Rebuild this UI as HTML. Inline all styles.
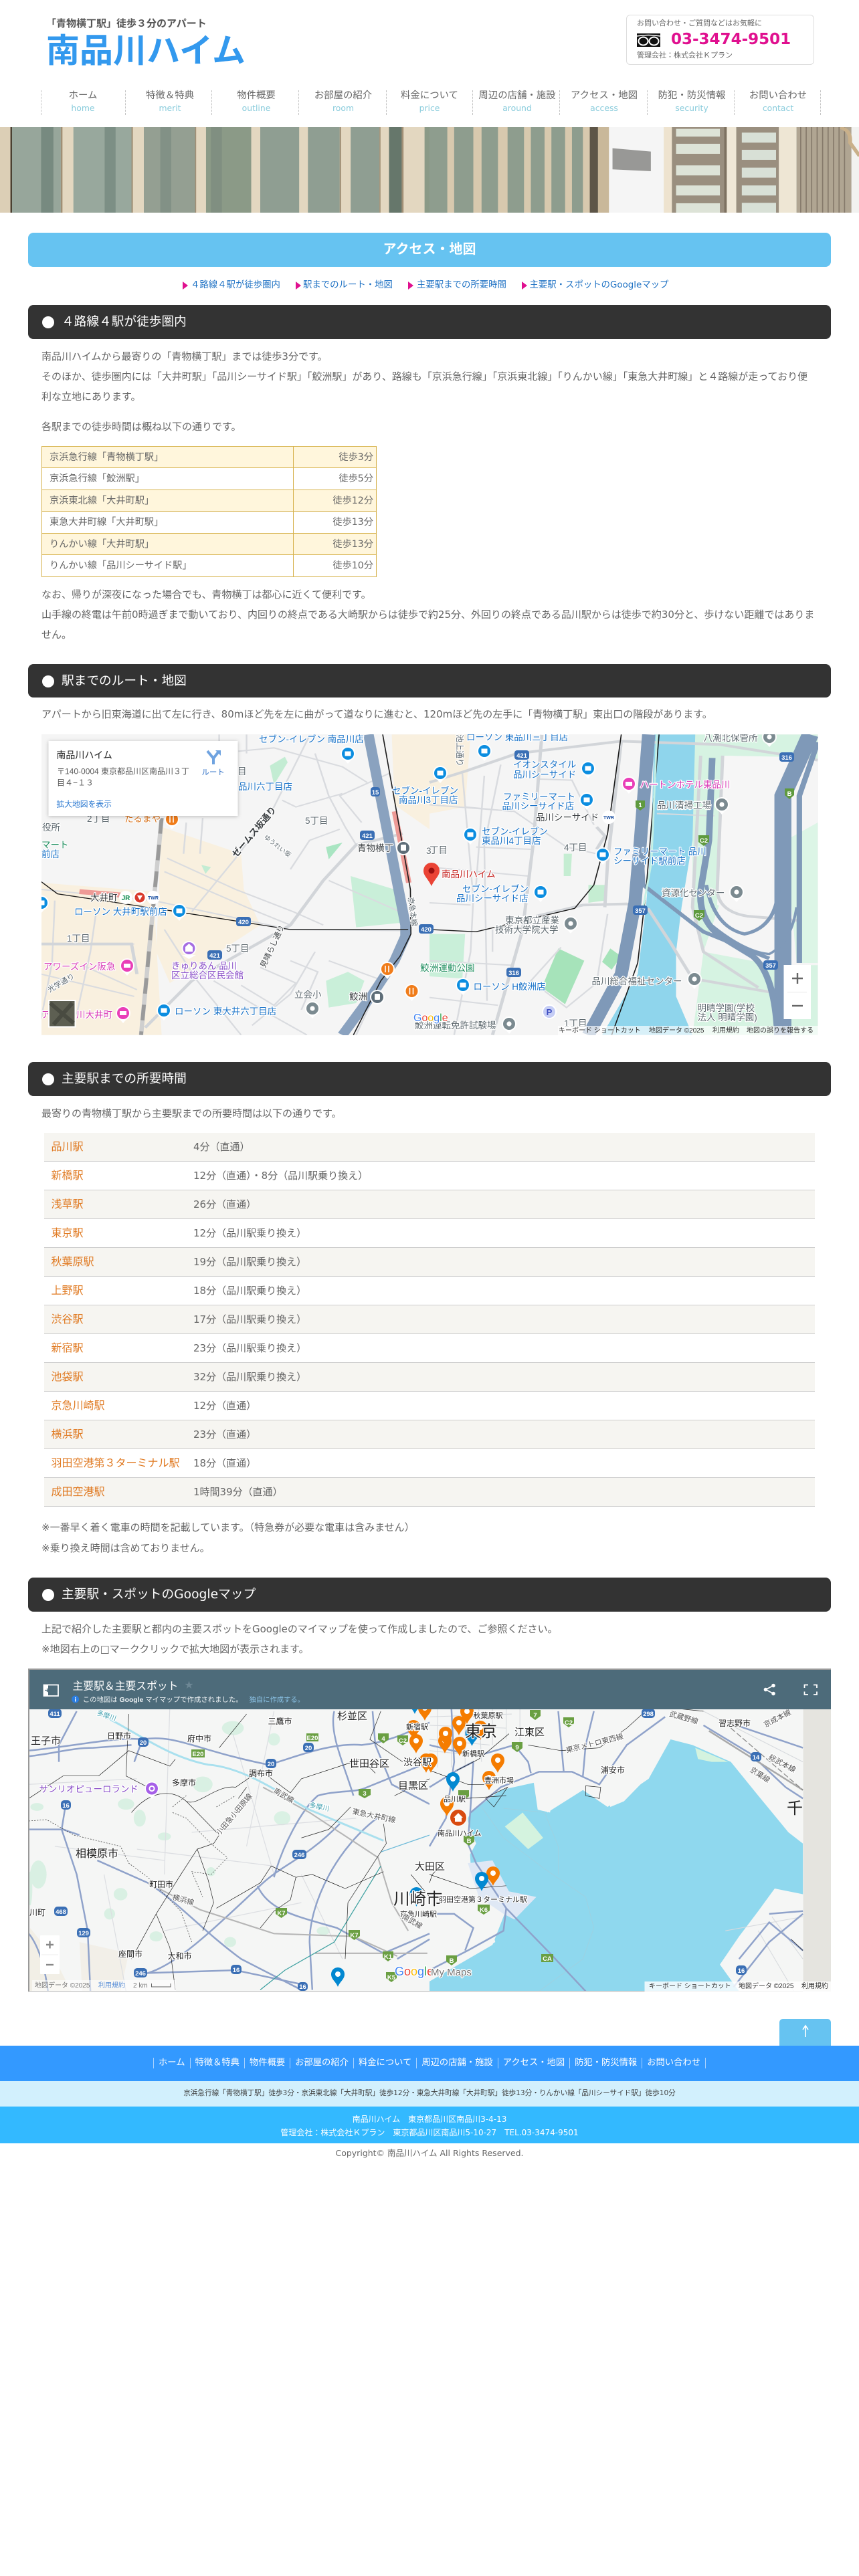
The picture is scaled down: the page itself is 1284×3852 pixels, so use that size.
<!DOCTYPE html>
<html lang="ja"><head><meta charset="utf-8"><title>アクセス・地図 | 南品川ハイム</title>
<style>
html,body{margin:0;padding:0;background:#fff}
body{position:relative;width:1284px;height:3852px;overflow:hidden;font-family:"DejaVu Sans","Noto Sans CJK JP",sans-serif;color:#666;font-size:14.4px}
.t{position:absolute;white-space:nowrap;line-height:20px;height:20px}
.p{font-size:15px;margin-top:1px}
.b{position:absolute}
.bar{position:absolute;left:42px;width:1200px;background:#333;border-radius:8px;color:#fff;font-size:18.7px}
.bar i{position:absolute;left:21px;width:18px;height:18px;border-radius:50%;background:#fff}
.bar span{position:absolute;left:50px;white-space:nowrap}
.nv{position:absolute;top:135px;height:37px;border-left:1px dashed #c4c4c4}
.nl{position:absolute;width:130px;text-align:center;top:133px;line-height:20px;font-size:14.4px;color:#666;white-space:nowrap}
.ns{position:absolute;width:130px;text-align:center;top:152px;line-height:20px;font-size:12.4px;color:#8accdc;white-space:nowrap}
.a{position:absolute;top:417px;line-height:20px;font-size:13.4px;color:#1f72c4;white-space:nowrap}
.ar{position:absolute;top:421px;width:0;height:0;border-left:8px solid #e0108f;border-top:6px solid transparent;border-bottom:6px solid transparent}
table{border-collapse:collapse;position:absolute}
#t1{left:62px;top:667px;width:500px;table-layout:fixed}
#t1 td{border:1px solid #d6b24c;height:31.5px;padding:0 4px 0 11px;font-size:14.2px;color:#666;box-sizing:border-box;white-space:nowrap;line-height:20px}
#t1 td+td{text-align:right}
#t1 tr:nth-child(odd) td{background:#fff6dc}
.r{position:absolute;left:66px;width:1152px;height:43px;border-bottom:1px solid #ccc;box-sizing:border-box}
.r.o{background:#f6f5f1}
.r b{position:absolute;left:10.5px;top:11px;font-weight:normal;font-size:16px;color:#e07a22;line-height:20px;white-space:nowrap}
.r u{position:absolute;left:223px;top:11px;text-decoration:none;font-size:15px;color:#666;line-height:20px;white-space:nowrap}
svg{position:absolute;display:block}
svg text{font-family:"Liberation Sans","Noto Sans CJK JP",sans-serif}
.h{paint-order:stroke;stroke:#fff;stroke-width:2.5px;stroke-linejoin:round}
.bl{fill:#1a73c8;font-size:13.5px}.gy{fill:#5f6a70;font-size:13.5px}.dk{fill:#3c4043;font-size:13.5px}.pk{fill:#d83bb5;font-size:13.5px}.pu{fill:#8a4fc8;font-size:13.5px}.gr{fill:#1e8e5e;font-size:13.5px}.og{fill:#d9731c;font-size:13.5px}
.s{fill:#fff;font-size:9.5px;font-weight:bold;text-anchor:middle}
.k{fill:#222;font-size:12px}.k2{fill:#222;font-size:15px}.k3{fill:#222;font-size:11px}.rl{fill:#555;font-size:11px}
.at{font-size:10px;fill:#333}
.fn{position:absolute;left:0;width:1284px;top:3075px;display:flex;justify-content:center;color:#fff;font-size:13.3px;line-height:20px;white-space:nowrap}
.fn span{padding:0 7px;border-left:1px solid #a8d2ff;height:16px;line-height:16px;margin-top:2px}
.fn span:last-child{padding:0;width:0}
.c{position:absolute;left:0;width:1284px;text-align:center;white-space:nowrap;line-height:20px}
</style></head><body>

<div class="t" style="left:69px;top:25px;font-size:15px;font-weight:bold;color:#555">「青物横丁駅」徒歩３分のアパート</div>
<div class="t" style="left:69px;top:66px;font-size:50px;font-weight:bold;color:#3399ee;line-height:20px">南品川ハイム</div>

<div class="b" style="left:936px;top:22px;width:281px;height:75px;border:1px solid #ddd;border-radius:6px;box-sizing:border-box"></div>
<div class="t" style="left:952px;top:25px;font-size:11px;color:#666">お問い合わせ・ご質問などはお気軽に</div>
<svg style="left:952px;top:50px" width="35" height="20" viewBox="0 0 35 20"><rect width="35" height="20" fill="#111"/><path d="M0 4 Q17 1 35 4" stroke="#fff" stroke-width="1.6" fill="none"/><ellipse cx="9.500" cy="11.500" rx="7" ry="6" fill="none" stroke="#fff" stroke-width="2"/><ellipse cx="25.500" cy="11.500" rx="7" ry="6" fill="none" stroke="#fff" stroke-width="2"/></svg>
<div class="t" style="left:1003px;top:49px;font-size:23px;font-weight:bold;color:#e0108f">03-3474-9501</div>
<div class="t" style="left:952px;top:73px;font-size:11px;color:#666">管理会社：株式会社Ｋプラン</div>

<div class="nv" style="left:61px"></div><div class="nv" style="left:187px"></div><div class="nv" style="left:316px"></div><div class="nv" style="left:446px"></div><div class="nv" style="left:577px"></div><div class="nv" style="left:706px"></div><div class="nv" style="left:836px"></div><div class="nv" style="left:967px"></div><div class="nv" style="left:1097px"></div><div class="nv" style="left:1226px"></div>
<div class="nl" style="left:59px">ホーム</div><div class="ns" style="left:59px">home</div>
<div class="nl" style="left:189px">特徴＆特典</div><div class="ns" style="left:189px">merit</div>
<div class="nl" style="left:318px">物件概要</div><div class="ns" style="left:318px">outline</div>
<div class="nl" style="left:448px">お部屋の紹介</div><div class="ns" style="left:448px">room</div>
<div class="nl" style="left:577px">料金について</div><div class="ns" style="left:577px">price</div>
<div class="nl" style="left:708px">周辺の店舗・施設</div><div class="ns" style="left:708px">around</div>
<div class="nl" style="left:838px">アクセス・地図</div><div class="ns" style="left:838px">access</div>
<div class="nl" style="left:969px">防犯・防災情報</div><div class="ns" style="left:969px">security</div>
<div class="nl" style="left:1098px">お問い合わせ</div><div class="ns" style="left:1098px">contact</div>

<!-- hero -->
<svg style="left:0;top:190px" width="1284" height="128" viewBox="0 190 1284 128">
<rect x="0" y="190" width="1284" height="128" fill="#8f9e92"/>
<g transform="scale(.4095,.3333)">
<rect y="570" width="40" height="385" fill="#dccfb6"/><rect x="38" y="570" width="6" height="385" fill="#4a4032"/>
<rect x="44" y="570" width="180" height="385" fill="#97a69b"/><rect x="150" y="570" width="45" height="385" fill="#778a80"/>
<rect x="268" y="570" width="215" height="385" fill="#98a89d"/><rect x="382" y="570" width="40" height="385" fill="#7c8f85"/>
<rect x="525" y="570" width="190" height="385" fill="#949f92"/><rect x="585" y="570" width="40" height="385" fill="#829186"/>
<rect x="752" y="570" width="165" height="385" fill="#8b9a87"/><rect x="770" y="570" width="40" height="385" fill="#808f81"/>
<g fill="#e3d7c0">
<rect x="222" y="570" width="46" height="385"/><rect x="484" y="570" width="41" height="385"/><rect x="714" y="570" width="38" height="385"/><rect x="917" y="570" width="33" height="385"/><rect x="1092" y="570" width="32" height="385"/><rect x="1240" y="570" width="40" height="385"/><rect x="1385" y="570" width="35" height="385"/><rect x="1472" y="570" width="78" height="385"/></g>
<g fill="#a08f75"><rect x="222" y="570" width="6" height="385"/><rect x="480" y="570" width="5" height="385"/><rect x="712" y="570" width="4" height="385"/><rect x="1240" y="570" width="5" height="385"/><rect x="1385" y="570" width="4" height="385"/><rect x="1465" y="570" width="8" height="385"/></g>
<rect x="1420" y="570" width="46" height="385" fill="#66776b"/>
<rect x="1550" y="570" width="20" height="385" fill="#8b9a87"/>
</g>
<g transform="translate(642,0) scale(.4095,.3333)">
<rect y="570" width="1530" height="385" fill="#8e9d8e"/>
<g fill="#d8c9ae"><rect x="65" y="570" width="25" height="385"/><rect x="160" y="570" width="30" height="385"/><rect x="250" y="570" width="35" height="385"/><rect x="345" y="570" width="25" height="385"/><rect x="420" y="570" width="25" height="385"/><rect x="495" y="570" width="25" height="385"/><rect x="560" y="570" width="28" height="385"/></g>
<rect x="585" y="570" width="30" height="385" fill="#5d5547"/><rect x="615" y="570" width="42" height="385" fill="#c9b89a"/>
<rect x="655" y="570" width="205" height="385" fill="#f5f5f5"/>
<polygon points="668,665 808,680 808,768 668,760" fill="#989896"/>
<rect x="855" y="570" width="30" height="385" fill="#eee3cf"/>
<rect x="885" y="570" width="190" height="385" fill="#9a8f7f"/>
<g fill="#dde3d7"><rect x="900" y="578" width="160" height="35"/><rect x="900" y="645" width="160" height="45"/><rect x="900" y="742" width="160" height="45"/><rect x="900" y="832" width="160" height="45"/><rect x="900" y="912" width="160" height="43"/></g>
<rect x="1075" y="570" width="45" height="385" fill="#efe7d6"/><rect x="1075" y="570" width="10" height="385" fill="#7d7160"/>
<rect x="1120" y="570" width="155" height="385" fill="#9a8f7f"/>
<g fill="#d8e0d6"><rect x="1140" y="595" width="125" height="45"/><rect x="1140" y="672" width="125" height="45"/><rect x="1140" y="752" width="125" height="45"/><rect x="1140" y="832" width="125" height="45"/><rect x="1140" y="910" width="125" height="45"/></g>
<rect x="1275" y="570" width="65" height="385" fill="#eee6d4"/>
<rect x="1340" y="570" width="200" height="385" fill="#b0a592"/>
<g stroke="#85796a" stroke-width="4"><path d="M1355 570V955M1375 570V955M1395 570V955M1415 570V955M1435 570V955M1455 570V955M1475 570V955M1495 570V955M1515 570V955"/></g>
<rect x="1540" y="570" width="30" height="385" fill="#f2f2f0"/>
<path d="M1500 572 Q1540 585 1535 640 L1570 700" stroke="#c9b08a" stroke-width="14" fill="none"/>
</g>
</svg>

<!-- title -->
<div class="b" style="left:42px;top:348px;width:1200px;height:51px;background:#66c3f1;border-radius:8px"></div>
<div class="c" style="top:362px;color:#fff;font-size:20px;font-weight:bold">アクセス・地図</div>

<i class="ar" style="left:272.500px"></i><div class="a" style="left:285px">４路線４駅が徒歩圏内</div>
<i class="ar" style="left:442px"></i><div class="a" style="left:453px">駅までのルート・地図</div>
<i class="ar" style="left:610px"></i><div class="a" style="left:623px">主要駅までの所要時間</div>
<i class="ar" style="left:780px"></i><div class="a" style="left:791.500px">主要駅・スポットのGoogleマップ</div>

<div class="bar" style="top:456px;height:51px"><i style="top:17px"></i><span style="top:14px;line-height:24px">４路線４駅が徒歩圏内</span></div>
<div class="t p" style="left:62px;top:522px">南品川ハイムから最寄りの「青物横丁駅」までは徒歩3分です。</div>
<div class="t p" style="left:62px;top:552px">そのほか、徒歩圏内には「大井町駅」「品川シーサイド駅」「鮫洲駅」があり、路線も「京浜急行線」「京浜東北線」「りんかい線」「東急大井町線」と４路線が走っており便</div>
<div class="t p" style="left:62px;top:582px">利な立地にあります。</div>
<div class="t p" style="left:62px;top:627px">各駅までの徒歩時間は概ね以下の通りです。</div>

<table id="t1"><colgroup><col style="width:375.500px"><col style="width:124.500px"></colgroup>
<tr style="height:32px"><td>京浜急行線「青物横丁駅」</td><td>徒歩3分</td></tr>
<tr style="height:33px"><td>京浜急行線「鮫洲駅」</td><td>徒歩5分</td></tr>
<tr style="height:32px"><td>京浜東北線「大井町駅」</td><td>徒歩12分</td></tr>
<tr style="height:33px"><td>東急大井町線「大井町駅」</td><td>徒歩13分</td></tr>
<tr style="height:32px"><td>りんかい線「大井町駅」</td><td>徒歩13分</td></tr>
<tr style="height:33px"><td>りんかい線「品川シーサイド駅」</td><td>徒歩10分</td></tr>
</table>

<div class="t p" style="left:62px;top:878px">なお、帰りが深夜になった場合でも、青物横丁は都心に近くて便利です。</div>
<div class="t p" style="left:62px;top:908px">山手線の終電は午前0時過ぎまで動いており、内回りの終点である大崎駅からは徒歩で約25分、外回りの終点である品川駅からは徒歩で約30分と、歩けない距離ではありま</div>
<div class="t p" style="left:62px;top:938px">せん。</div>

<div class="bar" style="top:993px;height:50px"><i style="top:17px"></i><span style="top:14px;line-height:24px">駅までのルート・地図</span></div>
<div class="t p" style="left:62px;top:1057px">アパートから旧東海道に出て左に行き、80mほど先を左に曲がって道なりに進むと、120mほど先の左手に「青物横丁駅」東出口の階段があります。</div>

<!-- MAP 1 -->
<svg style="left:62px;top:1098px" width="1161" height="450" viewBox="62 1098 1161 450">
<defs>
<g id="pb"><path d="M-6 8 L0 15 L6 8Z" fill="#fff"/><circle r="11" fill="#fff"/><circle r="9" fill="#0b8de0"/><rect x="-4.500" y="-3.500" width="9" height="7" fill="#fff"/></g>
<g id="po"><path d="M-6 8 L0 15 L6 8Z" fill="#fff"/><circle r="11" fill="#fff"/><circle r="9" fill="#f07c1a"/><path d="M-3 -5V5M2 -5V5" stroke="#fff" stroke-width="1.600"/></g>
<g id="pp"><path d="M-6 8 L0 15 L6 8Z" fill="#fff"/><circle r="11" fill="#fff"/><circle r="9" fill="#e93fb8"/><rect x="-5" y="-3" width="10" height="6" fill="#fff"/></g>
<g id="pg"><path d="M-6 8 L0 15 L6 8Z" fill="#fff"/><circle r="11" fill="#fff"/><circle r="9" fill="#7b8a90"/><circle r="3.600" fill="#fff"/></g>
<g id="pd"><circle r="11" fill="#fff"/><circle r="9" fill="#5e6d78"/><rect x="-4" y="-5" width="8" height="9" rx="1" fill="#fff"/></g>
</defs>
<rect x="62" y="1098" width="1161" height="450" fill="#f5f5f5"/>
<g transform="translate(0,1090) scale(.4095,.3333)">
<path d="M150 690 L560 730 L590 1373 L150 1373Z" fill="#f9f0df"/>
<path d="M590 440 L880 560 L890 720 L950 880 L800 1000 L620 1140 L570 1000Z" fill="#f9f0df"/>
<path d="M1430 25 L1568 25 L1568 450 L1440 340Z" fill="#f9f0df"/>
<path d="M1280 660 L1440 720 L1460 870 L1300 890Z" fill="#c9efd9"/>
<path d="M1190 530 L1250 510 L1200 585Z" fill="#a9e5c2"/>
<path d="M985 165 L1040 125 L1050 150 L1000 250Z" fill="#c3ecd3"/>
<path d="M735 610 L770 620 L750 650Z" fill="#c3ecd3"/>
<path d="M1190 1130 L1270 1090 L1330 1130 L1300 1230 L1200 1250Z" fill="#c9efd9"/>
<g fill="none" stroke="#d9dbdf" stroke-width="6">
<path d="M1130 30 L1000 350 L860 580 L700 820"/>
<path d="M870 100 L1000 85 L1250 170 L1340 240"/>
<path d="M150 965 L490 965"/>
<path d="M150 720 L560 770 L1060 900 L1500 905"/>
<path d="M610 580 L860 720 L1070 820 L1180 880"/>
<path d="M600 640 L900 800 L1060 880"/>
<path d="M740 400 L730 560 M680 420 L670 560"/>
<path d="M900 25 L900 110 M800 25 L800 100"/>
<path d="M1150 110 L1200 300 L1260 440 L1300 520"/>
<path d="M1030 320 L1080 350 L1250 290"/>
<path d="M1060 630 L1130 500 L1240 450"/>
<path d="M1200 680 L1460 820"/>
<path d="M1150 1000 L1060 1190 L920 1330"/>
<path d="M200 770 L190 1050 L150 1300"/>
<path d="M350 830 L330 1000 L280 1280"/>
<path d="M150 1100 L490 1200"/>
<path d="M300 1060 L500 1170"/>
<path d="M600 900 L720 1130 L880 1373"/>
<path d="M780 1130 L1000 1290 L1120 1373"/>
<path d="M950 1070 L1080 1140 L1000 1240 L880 1150"/>
<path d="M1200 1040 L1400 1130"/>
<path d="M1380 1160 L1300 1373"/>
<path d="M1060 1040 L1160 1090 L1100 1260"/>
<path d="M1420 200 L1240 300 L1320 420"/>
</g>
<g fill="none" stroke="#d2d5d9" stroke-width="12">
<path d="M1470 470 L1300 520 L1180 680 L1060 880 L700 1130 L530 1340"/>
<path d="M150 965 L480 965 L500 1100"/>
</g>
<path d="M590 400 L515 1373" stroke="#cfcfcf" stroke-width="16" fill="none"/>
<path d="M590 400 L515 1373" stroke="#9a9a9a" stroke-width="14" fill="none" stroke-dasharray="70 50"/>
<path d="M1345 25 L1480 880 L1480 930 L1440 1040 L1360 1190 L1250 1373" stroke="#8aa2bf" stroke-width="38" fill="none"/>
<path d="M1440 370 L1492 690" stroke="#ee9a96" stroke-width="20" fill="none"/>
<path d="M290 730 L440 745" stroke="#ee9a96" stroke-width="22" fill="none"/>
<g fill="none" stroke="#1c1c1c" stroke-width="4">
<path d="M150 685 L210 740 L620 815 L1060 900 L1490 900"/>
<path d="M1397 25 L1440 320 L1498 720 L1500 920 L1460 1020 L1390 1130 L1290 1373"/>
</g>
</g>
<g transform="translate(642,1090) scale(.4095,.3333)">
<path d="M0 25 L150 25 L130 350 L0 380Z" fill="#f9f0df"/>
<path d="M960 25 L1417 25 L1417 140 L1090 120 L1060 780 L1000 1000 L1260 1060 L1417 1060 L1417 1373 L960 1373 L1000 1000 L960 800Z" fill="#d6f3e2"/>
<path d="M820 25 L970 25 L960 500 L920 800 L900 1000 L900 1200 L960 1373 L630 1373 L760 1100 L790 800 L810 500Z" fill="#8fd5ec"/>
<path d="M1070 120 L1290 125 L1270 340 L1240 840 L1050 790 L1060 400Z" fill="#f6f6f6"/>
<path d="M1300 500 L1417 420 L1417 1050 L1340 1050Z" fill="#dcf5e6"/>
<path d="M470 985 L565 1040 L495 1235 L410 1160Z" fill="#a6e3ba"/>
<path d="M660 985 L700 1020 L665 1080 L630 1045Z" fill="#a6e3ba"/>
<path d="M580 700 L640 700 L640 770 L580 780Z" fill="#c5edd2"/>
<path d="M0 920 L130 920 L120 1120 L0 1110Z" fill="#c9efd9"/>
<path d="M490 560 L520 560 L515 660 L490 660Z" fill="#c5edd2"/>
<g fill="none" stroke="#d9dbdf" stroke-width="6">
<path d="M120 200 L160 760 L150 1000 L90 1373"/>
<path d="M200 210 L170 700 M260 160 L200 520 L210 1220"/>
<path d="M0 340 L310 370 L500 530 L610 560"/>
<path d="M0 780 L150 790 M0 1040 L300 1060 M0 1205 L250 1240"/>
<path d="M130 350 L300 370 M170 530 L370 540"/>
<path d="M0 620 L360 660 M230 900 L230 1000"/>
<path d="M480 980 L370 1130 L500 1250 L610 1140 L650 830"/>
<path d="M830 380 L1040 390"/>
<path d="M400 225 L520 230 L600 430"/>
</g>
<g fill="none" stroke="#d2d5d9" stroke-width="12">
<path d="M0 240 L130 190 L320 110 L700 55 L1060 70 L1417 140"/>
<path d="M410 25 L380 500 L340 900 L230 1373"/>
<path d="M700 55 L650 600 L640 800"/>
<path d="M390 840 L560 790 L720 785 L800 810 L880 960 L960 1120 L1240 1180"/>
<path d="M990 120 L960 800 L1000 1000 L1200 1160"/>
<path d="M1070 120 L1050 730 Q1060 820 1160 840 L1350 860"/>
<path d="M610 440 L640 480 L610 540"/>
</g>
<g fill="none" stroke="#7f99b8">
<path d="M800 25 L770 500 L750 780 L700 1100 L580 1373" stroke-width="48"/>
<path d="M1390 25 L1290 300 L1290 1373" stroke-width="62"/>
<path d="M1417 60 L1350 300 L1350 1050" stroke-width="20"/>
<path d="M1032 130 L1020 500 L990 720 Q980 850 1060 930 L1180 1020 Q1260 1100 1270 1373" stroke-width="24"/>
<path d="M770 460 L780 700 L1000 910 L1240 1030" stroke-width="16"/>
<path d="M1010 700 Q1040 890 1150 920 Q1270 890 1275 700" stroke-width="14"/>
<path d="M1030 880 Q1150 1000 1240 1010 Q1320 960 1340 800" stroke-width="10"/>
</g>
<g fill="none" stroke="#1c1c1c" stroke-width="4">
<path d="M0 900 L170 910 L530 805 L600 700 L650 470 L700 25"/>
<path d="M838 25 L790 730 L760 1050 L665 1373"/>
</g>
<path d="M830 25 L810 600 L780 800" stroke="#c4f0e5" stroke-width="7" fill="none"/>
</g>

<!-- pins -->
<use href="#pb" x="520" y="1127"/><use href="#pb" x="268" y="1362"/><use href="#pb" x="245" y="1511"/><use href="#pb" x="62" y="1350"/>
<use href="#pb" x="724" y="1123"/><use href="#pb" x="658" y="1156"/><use href="#pb" x="879" y="1149"/><use href="#pb" x="877" y="1196"/><use href="#pb" x="703" y="1248"/><use href="#pb" x="901" y="1278"/><use href="#pb" x="808" y="1334"/><use href="#pb" x="692" y="1473"/>
<use href="#po" x="257" y="1225"/><use href="#po" x="579" y="1449"/><use href="#po" x="615.500" y="1482"/>
<use href="#pp" x="190" y="1444"/><use href="#pp" x="184" y="1515"/><use href="#pp" x="940" y="1172"/>
<use href="#pg" x="1150" y="1102"/><use href="#pg" x="1079" y="1203"/><use href="#pg" x="1101" y="1334"/><use href="#pg" x="1038" y="1464"/><use href="#pg" x="761" y="1531"/><use href="#pg" x="853" y="1381"/><use href="#pg" x="467" y="1508"/>
<use href="#pd" x="603" y="1268"/><use href="#pd" x="564" y="1491"/>
<path d="M272 1428 L282.500 1434 L293 1428Z" fill="#fff"/><circle cx="282.500" cy="1418" r="11" fill="#fff"/><circle cx="282.500" cy="1418" r="9" fill="#a56de2"/><path d="M277 1423V1416L282.500 1411L288 1416V1423Z" fill="#fff"/>
<circle cx="188" cy="1342" r="10" fill="#fff"/><text x="188" y="1346" style="font-size:10px;font-weight:bold;text-anchor:middle;fill:#0a8a4a">JR</text>
<circle cx="209" cy="1342" r="10" fill="#fff"/><circle cx="209" cy="1342" r="7.500" fill="#d93a2b"/><path d="M205 1339H213L209 1346Z" fill="#fff"/>
<circle cx="229" cy="1342" r="10" fill="#fff"/><text x="229" y="1345" style="font-size:7px;font-weight:bold;text-anchor:middle;fill:#1a4fa0">TWR</text>
<circle cx="910" cy="1222" r="10" fill="#fff"/><text x="910" y="1225" style="font-size:7px;font-weight:bold;text-anchor:middle;fill:#1a4fa0">TWR</text>
<circle cx="821" cy="1513" r="10" fill="#c5cdf5" stroke="#fff" stroke-width="2"/><text x="821" y="1518" style="font-size:13px;font-weight:bold;text-anchor:middle;fill:#3b4cc0">P</text>
<path d="M645 1325 C640 1314 633 1310 633 1302 A12 12 0 0 1 657 1302 C657 1310 650 1314 645 1325Z" fill="#ea4335"/><circle cx="645" cy="1302" r="4.500" fill="#9c0f0f"/>

<!-- shields -->
<g fill="#3a6fb5"><rect x="554" y="1177" width="14" height="14" rx="4"/><rect x="538" y="1242" width="22" height="14" rx="4"/><rect x="353" y="1371" width="22" height="14" rx="4"/><rect x="310" y="1421" width="22" height="14" rx="4"/><rect x="626" y="1382" width="22" height="14" rx="4"/><rect x="769" y="1122" width="22" height="14" rx="4"/><rect x="757" y="1447" width="22" height="14" rx="4"/><rect x="946" y="1354" width="22" height="14" rx="4"/><rect x="1141" y="1436" width="22" height="14" rx="4"/><rect x="1165" y="1125" width="22" height="14" rx="4"/></g>
<g fill="#5f9a3e"><path d="M950 1197H964V1207L957 1212L950 1207Z"/><path d="M1044 1249H1060V1259L1052 1265L1044 1259Z"/><path d="M1037 1361H1053V1371L1045 1377L1037 1371Z"/><path d="M1173 1179H1187V1189L1180 1195L1173 1189Z"/></g>
<text class="s" x="561" y="1188">15</text><text class="s" x="549" y="1253">421</text><text class="s" x="364" y="1382">420</text><text class="s" x="321" y="1432">421</text><text class="s" x="637" y="1393">420</text><text class="s" x="780" y="1133">421</text><text class="s" x="768" y="1458">316</text><text class="s" x="957" y="1365">357</text><text class="s" x="1152" y="1447">357</text><text class="s" x="1176" y="1136">316</text><text class="s" x="957" y="1207">1</text><text class="s" x="1052" y="1260">C2</text><text class="s" x="1045" y="1372">C2</text><text class="s" x="1180" y="1190">B</text>

<!-- labels -->
<g class="h">
<text class="bl" x="387" y="1110">セブン-イレブン 南品川店</text>
<text class="bl" x="586" y="1187">セブン-イレブン</text><text class="bl" x="596" y="1201">南品川3丁目店</text>
<text class="bl" x="356" y="1181">品川六丁目店</text>
<text class="gy" x="355" y="1158">目</text><text class="gy" x="130" y="1229">2丁目</text><text class="og" x="186" y="1229">たるまや</text><text class="gy" x="63" y="1242">役所</text>
<text class="gr" x="62" y="1268">マート</text><text class="bl" x="62" y="1282">前店</text><text class="gy" x="456" y="1232">5丁目</text>
<text class="dk" transform="translate(353,1283) rotate(-50)" style="font-size:13.500px;font-weight:bold">ゼームス坂通り</text>
<text class="gy" transform="translate(394,1253) rotate(38)" style="font-size:9.500px">ゆうれい坂</text>
<text class="dk" x="534" y="1273">青物横丁</text><text class="dk" x="135" y="1347">大井町</text>
<text class="bl" x="111" y="1368">ローソン 大井町駅前店</text>
<text class="gy" x="100" y="1408">1丁目</text><text class="gy" x="338" y="1423">5丁目</text>
<text class="dk" transform="translate(396,1448) rotate(-65)" style="font-size:11.500px">見晴らし通り</text>
<text class="pk" x="65" y="1450">アワーズイン阪急</text>
<text class="pu" x="256" y="1449">きゅりあん 品川</text><text class="pu" x="256" y="1463">区立総合区民会館</text>
<text class="gy" transform="translate(74,1484) rotate(-30)" style="font-size:11px">光学通り</text>
<text class="gy" x="440" y="1492">立会小</text><text class="dk" x="522" y="1495">鮫洲</text>
<text class="bl" x="261" y="1517">ローソン 東大井六丁目店</text>
<text class="pk" x="114" y="1522">川大井町</text><text class="pk" x="62" y="1522">ア</text>
<text class="gy" x="637" y="1277">3</text><text class="gr" x="628" y="1452">鮫</text>
<text class="gy" transform="translate(610,1342) rotate(82)" style="font-size:11px">京急本線</text>
<text class="gy" x="620" y="1538">鮫洲運転免許試験場</text>
<text class="bl" x="697" y="1107">ローソン 東品川三丁目店</text>
<text class="gy" transform="translate(683,1098) rotate(90)" style="font-size:12px">池上通り</text>
<text class="bl" x="767" y="1148">イオンスタイル</text><text class="bl" x="767" y="1163">品川シーサイド</text>
<text class="bl" x="752" y="1196">ファミリーマート</text><text class="bl" x="750.500" y="1210">品川シーサイド店</text>
<text class="dk" x="801" y="1227">品川シーサイド</text>
<text class="pk" x="956.500" y="1178">ハートンホテル東品川</text>
<text class="gy" x="982" y="1209">品川清掃工場</text><text class="gy" x="1051.500" y="1108">八潮北保管所</text>
<text class="bl" x="720" y="1248">セブン-イレブン</text><text class="bl" x="720" y="1262">東品川4丁目店</text>
<text class="gy" x="843" y="1272">4丁目</text><text class="gy" x="642" y="1276">丁目</text>
<text class="bl" x="917" y="1278">ファミリーマート 品川</text><text class="bl" x="917" y="1292">シーサイド駅前店</text>
<text x="660" y="1312" style="fill:#c5221f;font-size:13.500px">南品川ハイム</text>
<text class="bl" x="691" y="1334">セブン-イレブン</text><text class="bl" x="682" y="1348">品川シーサイド店</text>
<text class="gy" x="989" y="1340">資源化センター</text>
<text class="gy" x="755" y="1381">東京都立産業</text><text class="gy" x="740" y="1395">技術大学院大学</text>
<text class="gr" x="642" y="1452">洲運動公園</text>
<text class="bl" x="707.500" y="1480">ローソン H鮫洲店</text>
<text class="gy" x="884.500" y="1472">品川総合福祉センター</text>
<text class="gy" x="1042.500" y="1512">明晴学園(学校</text><text class="gy" x="1042.500" y="1526">法人 明晴学園)</text>
<text class="gy" x="843" y="1535">1丁目</text>
</g>
<text x="618" y="1527" class="h" style="font-size:16px"><tspan fill="#4285f4">G</tspan><tspan fill="#ea4335">o</tspan><tspan fill="#fbbc05">o</tspan><tspan fill="#4285f4">g</tspan><tspan fill="#34a853">l</tspan><tspan fill="#ea4335">e</tspan></text>

<!-- card -->
<rect x="72.500" y="1108" width="283" height="112" fill="#fff" style="filter:drop-shadow(0 1px 3px rgba(0,0,0,.25))"/>
<text x="84.400" y="1134" style="font-size:14px;fill:#222">南品川ハイム</text>
<text x="85" y="1157.500" style="font-size:12px;fill:#5b5b5b">〒140-0004 東京都品川区南品川３丁</text>
<text x="85" y="1174.500" style="font-size:12px;fill:#5b5b5b">目４−１３</text>
<text x="84.400" y="1206.500" style="font-size:11.800px;fill:#2a78d0">拡大地図を表示</text>
<text x="301.400" y="1158.500" style="font-size:11.500px;fill:#3b78c9">ルート</text>
<path d="M310 1123 L319 1134 V1143 M319 1134 L326 1125" fill="none" stroke="#6fa3e0" stroke-width="4"/><path d="M322 1122 H330 V1130Z" fill="#6fa3e0"/>

<rect x="73" y="1496" width="39.500" height="39.500" fill="#5d5f52" stroke="#fff" stroke-width="2"/>
<path d="M75 1500 L110 1530 M80 1532 L108 1500" stroke="#3c3e36" stroke-width="6" opacity=".6"/>
<rect x="1171.500" y="1443" width="40.500" height="81" fill="#fff"/>
<path d="M1184 1463H1200M1192 1455V1471" stroke="#666" stroke-width="2.400"/><path d="M1184 1504H1200" stroke="#666" stroke-width="2.400"/><path d="M1177 1483.500H1206" stroke="#e6e6e6"/>
<rect x="834" y="1534" width="389" height="14" fill="#fff" opacity=".65"/>
<text class="at" x="835" y="1544">キーボード ショートカット</text><text class="at" x="970" y="1544">地図データ ©2025</text><text class="at" x="1065" y="1544">利用規約</text><text class="at" x="1116" y="1544">地図の誤りを報告する</text>
</svg>

<!-- section 3 -->
<div class="bar" style="top:1588px;height:51px"><i style="top:17px"></i><span style="top:14px;line-height:24px">主要駅までの所要時間</span></div>
<div class="t p" style="left:62px;top:1654px">最寄りの青物横丁駅から主要駅までの所要時間は以下の通りです。</div>
<div class="b" style="left:66px;top:1694px;width:1152px;border-top:1px solid #ccc"></div>
<div class="r o" style="top:1694px"><b>品川駅</b><u>4分（直通）</u></div>
<div class="r" style="top:1737px"><b>新橋駅</b><u>12分（直通）・8分（品川駅乗り換え）</u></div>
<div class="r o" style="top:1780px"><b>浅草駅</b><u>26分（直通）</u></div>
<div class="r" style="top:1823px"><b>東京駅</b><u>12分（品川駅乗り換え）</u></div>
<div class="r o" style="top:1866px"><b>秋葉原駅</b><u>19分（品川駅乗り換え）</u></div>
<div class="r" style="top:1909px"><b>上野駅</b><u>18分（品川駅乗り換え）</u></div>
<div class="r o" style="top:1952px"><b>渋谷駅</b><u>17分（品川駅乗り換え）</u></div>
<div class="r" style="top:1995px"><b>新宿駅</b><u>23分（品川駅乗り換え）</u></div>
<div class="r o" style="top:2038px"><b>池袋駅</b><u>32分（品川駅乗り換え）</u></div>
<div class="r" style="top:2081px"><b>京急川崎駅</b><u>12分（直通）</u></div>
<div class="r o" style="top:2124px"><b>横浜駅</b><u>23分（直通）</u></div>
<div class="r" style="top:2167px"><b>羽田空港第３ターミナル駅</b><u>18分（直通）</u></div>
<div class="r o" style="top:2210px"><b>成田空港駅</b><u>1時間39分（直通）</u></div>
<div class="t p" style="left:62px;top:2273px">※一番早く着く電車の時間を記載しています。（特急券が必要な電車は含みません）</div>
<div class="t p" style="left:62px;top:2304px">※乗り換え時間は含めておりません。</div>

<!-- section 4 -->
<div class="bar" style="top:2359px;height:51px"><i style="top:17px"></i><span style="top:14px;line-height:24px">主要駅・スポットのGoogleマップ</span></div>
<div class="t p" style="left:62px;top:2425px">上記で紹介した主要駅と都内の主要スポットをGoogleのマイマップを使って作成しましたので、ご参照ください。</div>
<div class="t p" style="left:62px;top:2455px">※地図右上の□マーククリックで拡大地図が表示されます。</div>

<!-- MAP 2 -->
<svg style="left:42px;top:2495px" width="1200" height="484" viewBox="42 2495 1200 484">
<defs>
<g id="o"><path d="M0 0 C-3 -8 -10 -11 -10 -19 A10 10 0 0 1 10 -19 C10 -11 3 -8 0 0Z" fill="#f57c00"/><circle cy="-19" r="4" fill="#fff"/></g>
<g id="l"><path d="M0 0 C-3 -8 -10 -11 -10 -19 A10 10 0 0 1 10 -19 C10 -11 3 -8 0 0Z" fill="#0288d1"/><circle cy="-19" r="4" fill="#fff"/></g>
</defs>
<rect x="44" y="2556" width="1198" height="422" fill="#f5f6f5"/>
<g transform="translate(0,2340) scale(.4095,.4209)">
<g fill="#c3ecd5" opacity=".55">
<ellipse cx="850" cy="580" rx="40" ry="25"/><ellipse cx="1000" cy="620" rx="22" ry="22"/><ellipse cx="740" cy="780" rx="36" ry="28"/><ellipse cx="460" cy="850" rx="30" ry="20"/><ellipse cx="1030" cy="900" rx="30" ry="25"/><ellipse cx="510" cy="900" rx="22" ry="30"/><ellipse cx="440" cy="1170" rx="25" ry="22"/><ellipse cx="600" cy="965" rx="24" ry="14"/><ellipse cx="140" cy="1100" rx="30" ry="50"/><ellipse cx="400" cy="1240" rx="20" ry="20"/><ellipse cx="570" cy="1320" rx="24" ry="18"/><ellipse cx="840" cy="1340" rx="22" ry="18"/><ellipse cx="770" cy="1090" rx="16" ry="16"/><ellipse cx="1180" cy="1300" rx="24" ry="15"/><ellipse cx="135" cy="860" rx="24" ry="14"/><ellipse cx="110" cy="1150" rx="8" ry="60"/></g>
<path d="M110 1290 L200 1400 L260 1515 L105 1515Z" fill="#f2efe6"/>
<path d="M290 1340 L470 1380 L440 1515 L300 1515Z" fill="#f2efe8"/>
<g fill="none" stroke="#dcdee2" stroke-width="3">
<path d="M105 780 L500 760 M500 1010 L1000 1070 M200 1000 L600 1050 M700 950 L1300 900 M600 1300 L1100 1200 M380 1100 L460 1515 M1100 1100 L1250 1400 M620 500 L600 1100 M1000 520 L900 1000 M850 600 L1000 1100"/>
</g>
<g fill="none" stroke="#8fa2ca" stroke-width="6">
<path d="M105 660 C300 640 430 610 520 620 C640 600 720 660 980 710 C1060 690 1200 630 1320 640 C1420 630 1500 590 1568 560"/>
<path d="M105 680 C200 670 260 650 340 650 L480 640"/>
<path d="M520 620 L490 700"/>
<path d="M355 1050 L540 1130 C640 1190 740 1300 880 1400 L1100 1510"/>
<path d="M1000 1110 C1030 1000 1100 870 1160 820 C1230 800 1300 810 1340 790 L1568 700"/>
<path d="M1140 1510 L1130 1340 C1130 1200 1230 1000 1390 890"/>
<path d="M240 850 L225 940 L280 1100 L320 1300 L330 1515"/>
<path d="M105 1310 C130 1340 160 1400 175 1515"/>
<path d="M490 1460 C620 1450 760 1310 960 1130 C1040 1060 1120 1040 1240 920"/>
<path d="M540 1450 L860 1440 L1100 1490"/>
<path d="M1220 520 C1200 600 1260 720 1290 820"/>
<path d="M1360 520 L1370 640 L1430 780 L1568 850"/>
<path d="M105 940 L230 940 L290 960"/>
<path d="M215 700 L215 640 L280 520"/>
<path d="M940 1140 C980 1230 1090 1250 1230 1290 L1400 1380 L1568 1310"/>
<path d="M1450 1400 L1568 1330"/>
</g>
<g fill="none" stroke="#b5b5b5" stroke-width="5">
<path d="M960 790 L1130 880 L1380 1040 L1430 1200 L1490 1300"/>
<path d="M540 1130 L730 1225 L1000 1310 L1290 1320 L1450 1390"/>
<path d="M1150 1380 L1560 1380"/>
</g>
<path d="M360 530 C480 580 600 680 760 710 C900 720 1050 830 1130 870 L1400 980" fill="none" stroke="#a9e0ee" stroke-width="7"/>
<path d="M950 1510 L1040 1440 L1220 1340 L1390 1070" fill="none" stroke="#3ca0a0" stroke-width="3"/>
<path d="M1390 1020 L1568 960" fill="none" stroke="#68b8d8" stroke-width="3"/>
<g fill="none" stroke="#222" stroke-width="1.700">
<path d="M480 880 C540 810 620 790 680 840 C720 860 790 780 860 790 L950 730 L1060 810 L1100 760 L1320 690 L1370 740"/>
<path d="M470 530 L460 750 L540 790"/>
<path d="M105 830 L230 750 L360 750 L470 660 L620 715 L640 690"/>
<path d="M680 840 L780 940 L800 960 L780 990 L720 1010 L660 1100 L570 1240 L480 1400"/>
<path d="M570 1240 L620 1360 L640 1510"/>
<path d="M720 1010 L760 1120 L780 1200 L740 1300"/>
<path d="M950 1290 L1000 1230 L1060 1190 L1080 1110 L990 1070 L950 1130 L790 1220"/>
<path d="M1080 1110 L1140 1100 L1260 1150 L1400 1090"/>
<path d="M1400 920 L1410 990 L1270 1200 L1260 1400"/>
<path d="M1280 860 L1200 940 L1100 970"/>
<path d="M870 830 L900 790 M800 650 L900 530"/>
<path d="M1390 520 L1350 620 L1470 700 M1440 820 L1568 760"/>
<path d="M1500 1100 L1568 1180"/>
</g>
<g fill="none" stroke="#333" stroke-width="1.700" stroke-dasharray="5 5">
<path d="M105 910 L170 905 L270 960 L440 1000 L470 1060 L540 1110 L660 1230 L700 1340"/>
<path d="M630 880 L680 900 L770 990 L830 1040 L770 1100 L700 1090 L740 1180"/>
<path d="M630 860 L680 820 M790 860 L860 820"/>
</g>
</g>
<g transform="translate(642,2340) scale(.4095,.4209)">
<path d="M150 880 L260 800 L400 770 L430 880 L560 800 L650 860 L800 760 L880 620 L960 640 L1100 700 L1200 820 L1310 950 L1363 990 L1363 1170 L1260 1150 L1200 1230 L1130 1320 L1060 1420 L1130 1515 L0 1515 L0 1480 L230 1350 L290 1200 L150 1060 L140 900Z" fill="#8fd8ee"/>
<path d="M140 1060 L230 1050 L290 1160 L390 1180 L310 1260 L270 1240 L180 1180Z" fill="#dfe8f5"/>
<path d="M275 930 L340 880 L415 970 L360 1010Z" fill="#d4f3df"/>
<path d="M0 1350 L150 1290 L230 1300 L240 1340 L120 1410 L0 1440Z" fill="#f5f6f5"/>
<path d="M380 770 L460 770 L440 880 L395 870Z" fill="#f5f6f5"/>
<path d="M640 790 L790 760 L710 840 L660 860Z" fill="#f5f6f5"/>
<path d="M970 650 L1090 700 L1030 700 L980 690Z" fill="#d4f3df"/>
<path d="M0 840 L110 830 L170 990 L130 1060 L0 1050Z" fill="#f5f6f5"/>
<g fill="none" stroke="#9fd0e0" stroke-width="2"><path d="M190 860 L270 970 L420 1080 L570 1180 L600 1290 L560 1400 L400 1515"/><path d="M270 865 L420 880 L470 1000 L470 1100"/></g>
<g fill="none" stroke="#d6d9dd" stroke-width="2.500">
<path d="M0 540 L300 530 M0 570 L280 580 M0 620 L220 640 M0 660 L200 680 M30 510 L30 720 M80 510 L80 720 M130 510 L130 720 M180 510 L190 700 M230 510 L230 640 M280 510 L280 620 M330 510 L330 640"/>
<path d="M1080 1300 L1363 1250 M1200 1300 L1330 1515 M1250 1250 L1363 1400 M1000 520 L1363 700"/>
</g>
<g fill="none" stroke="#8fa2ca" stroke-width="6">
<path d="M0 790 L100 730 L160 700 L150 860 L140 990 L170 1060 L280 1220 L270 1300 L140 1370 L0 1440"/>
<path d="M150 880 L260 790 L400 735 L520 735 L620 780 L720 640 L860 540"/>
<path d="M80 510 L90 700 L60 900 L0 1000"/>
<path d="M0 640 L170 680 L310 640 L360 700 L370 740"/>
<path d="M470 520 L490 735 M600 520 L570 640 L560 750"/>
<path d="M280 1220 L440 1380 L570 1515"/>
<path d="M1000 570 L1170 670 L1300 790 L1363 830"/>
<path d="M1090 560 L1363 650"/>
<path d="M1020 590 L1363 800" stroke="#a9a9a9"/>
<path d="M1130 1400 L1240 1270 L1363 1370"/>
<path d="M1110 1500 L1240 1340 L1363 1240"/>
<path d="M1240 1240 L1363 1230"/>
<path d="M130 1370 L160 1290 L90 1240 L0 1240"/>
</g>
<g fill="none" stroke="#222" stroke-width="1.700">
<path d="M290 600 L180 690 L100 730 M0 730 L140 780 L200 780 M130 830 L280 820 M0 1100 L150 1150 L280 1140"/>
<path d="M360 640 L480 660 L620 650 L720 580 L800 510"/>
<path d="M570 785 L625 790 L620 830 L570 820Z M220 820 L285 790 L235 860 L205 830Z"/>
<path d="M50 1060 L10 1100 L0 1130"/>
<path d="M900 510 L1000 520 M1320 1330 L1363 1370"/>
</g>
<path d="M1100 580 L1363 800" stroke="#888" stroke-width="3" stroke-dasharray="20 8" fill="none"/>
</g>

<!-- pins -->
<use href="#o" x="618" y="2601"/><use href="#o" x="635" y="2573"/><use href="#l" x="620" y="2563"/><use href="#o" x="622" y="2622"/><use href="#o" x="637" y="2651"/>
<use href="#l" x="622.500" y="2851"/><use href="#l" x="505" y="2971"/>
<use href="#o" x="698" y="2578"/><use href="#o" x="686" y="2595"/><use href="#o" x="665" y="2622"/><use href="#o" x="666" y="2611"/><use href="#o" x="687" y="2626"/><use href="#l" x="705.500" y="2611"/><use href="#o" x="718" y="2602"/><use href="#o" x="644" y="2651"/><use href="#o" x="744" y="2651"/><use href="#o" x="731" y="2677"/><use href="#l" x="677" y="2679"/><use href="#o" x="668" y="2716"/><use href="#o" x="737" y="2820"/><use href="#l" x="720" y="2828"/>
<circle cx="685" cy="2718" r="13" fill="#fff"/><circle cx="685" cy="2718" r="12" fill="#d84a10"/><path d="M678 2718 L685 2711 L692 2718 H690 V2724 H680 V2718Z" fill="#fff"/>
<path d="M220 2681 L227 2690 L234 2681Z" fill="#fff"/><circle cx="227" cy="2674.500" r="10.500" fill="#fff"/><circle cx="227" cy="2674.500" r="9" fill="#a65fe8"/><circle cx="227" cy="2674.500" r="3.600" fill="none" stroke="#fff" stroke-width="2"/>

<!-- shields -->
<g fill="#3a6fb5"><rect x="72" y="2555" width="20" height="14" rx="5"/><rect x="206" y="2598" width="16" height="14" rx="5"/><rect x="453" y="2606" width="16" height="14" rx="5"/><rect x="397" y="2630" width="16" height="14" rx="5"/><rect x="91" y="2692" width="15" height="14" rx="5"/><rect x="437" y="2766" width="21" height="14" rx="5"/><rect x="81" y="2851" width="20" height="14" rx="5"/><rect x="115" y="2883" width="20" height="14" rx="5"/><rect x="200" y="2943" width="20" height="14" rx="5"/><rect x="345" y="2938" width="16" height="14" rx="5"/><rect x="445" y="2964" width="15" height="13" rx="5"/><rect x="959" y="2555" width="20" height="14" rx="5"/><rect x="1122" y="2620" width="16" height="14" rx="5"/><rect x="1100" y="2939" width="16" height="14" rx="5"/></g>
<g fill="#6a9f42"><rect x="458" y="2592" width="18" height="12"/><rect x="286" y="2616" width="20" height="12"/><path d="M536 2675H554V2684L545 2689L536 2684Z"/><path d="M565 2592H581V2601L573 2607L565 2601Z"/><path d="M594 2595H610V2604L602 2610L594 2604Z"/><path d="M412 2853H429V2862L420.500 2868L412 2862Z"/><path d="M521 2886H538V2895L529.500 2901L521 2895Z"/><path d="M572 2918H588V2927L580 2933L572 2927Z"/><path d="M577 2949H593V2958L585 2964L577 2958Z"/><path d="M792 2557H808V2566L800 2572L792 2566Z"/><path d="M842 2568H858V2577L850 2583L842 2577Z"/><path d="M765 2605H781V2614L773 2620L765 2614Z"/><path d="M693 2745H709V2754L701 2760L693 2754Z"/><path d="M714 2848H732V2857L723 2863L714 2857Z"/><path d="M667 2924H683V2933L675 2939L667 2933Z"/><rect x="809" y="2922" width="18" height="12"/><path d="M685 2677H701V2686L693 2692L685 2686Z"/></g>
<g>
<text class="s" x="82" y="2566">411</text><text class="s" x="214" y="2609">20</text><text class="s" x="467" y="2602">E20</text><text class="s" x="461" y="2617">20</text><text class="s" x="296" y="2626">E20</text><text class="s" x="405" y="2641">20</text><text class="s" x="98.500" y="2703">16</text><text class="s" x="545" y="2685">3</text><text class="s" x="573" y="2603">4</text><text class="s" x="602" y="2606">C2</text><text class="s" x="447.500" y="2777">246</text><text class="s" x="91" y="2862">468</text><text class="s" x="125" y="2894">129</text><text class="s" x="210" y="2954">246</text><text class="s" x="353" y="2949">16</text><text class="s" x="452.500" y="2974">16</text><text class="s" x="420.500" y="2864">K7</text><text class="s" x="529.500" y="2897">K7</text><text class="s" x="580" y="2929">K1</text><text class="s" x="585" y="2960">K5</text><text class="s" x="800" y="2568">7</text><text class="s" x="850" y="2579">C2</text><text class="s" x="969" y="2566">298</text><text class="s" x="773" y="2616">9</text><text class="s" x="1130" y="2631">14</text><text class="s" x="701" y="2756">B</text><text class="s" x="723" y="2859">K6</text><text class="s" x="675" y="2935">B</text><text class="s" x="818" y="2932">CA</text><text class="s" x="1108" y="2950">16</text></g>

<!-- labels -->
<g class="h">
<text class="k2" x="504" y="2571">杉並区</text><text class="k" x="400.500" y="2578">三鷹市</text><text class="k2" x="46" y="2608">王子市</text><text class="k" x="160" y="2600">日野市</text><text class="k" x="280" y="2604">府中市</text>
<text class="k2" x="522" y="2642">世田谷区</text><text class="k3" x="603" y="2640" style="font-size:14px">渋谷駅</text><text class="k3" x="607" y="2586">新宿駅</text><text class="k2" x="595" y="2675">目黒区</text>
<text class="k" x="372" y="2656">調布市</text><text class="k" x="257" y="2670">多摩市</text>
<text class="pu" x="58.500" y="2680">サンリオピューロランド</text>
<text class="rl" transform="translate(408,2680) rotate(30)">南武線</text>
<text class="rl" transform="translate(328,2745) rotate(-50)">小田急小田原線</text>
<text class="rl" transform="translate(526,2712) rotate(12)">東急大井町線</text>
<text class="rl" transform="translate(144,2564) rotate(18)" style="fill:#3f9fae;font-size:10px">多摩川</text>
<text class="rl" transform="translate(462,2702) rotate(12)" style="fill:#3f9fae;font-size:10px">多摩川</text>
<text x="113" y="2777" style="font-size:16px;fill:#222">相模原市</text><text class="k" x="223" y="2822">町田市</text>
<text class="rl" transform="translate(257,2840) rotate(16)">横浜線</text>
<text class="k2" x="620" y="2796">大田区</text>
<text x="588" y="2848" style="font-size:24.500px;fill:#222">川崎市</text>
<text class="k3" x="598" y="2866">京急川崎駅</text>
<text class="rl" transform="translate(600,2868) rotate(30)">南武線</text>
<text class="k" x="177" y="2926">座間市</text><text class="k" x="250.600" y="2929">大和市</text><text class="k" x="44" y="2864">川町</text>
<text class="k3" x="707.500" y="2569">秋葉原駅</text><text class="k2" x="769" y="2595">江東区</text><text x="695" y="2597" style="font-size:24px;fill:#222">東京</text>
<text class="k3" x="691" y="2626">新橋駅</text><text class="k3" x="724" y="2666">豊洲市場</text><text class="k3" x="663" y="2694">品川駅</text><text class="k3" x="654" y="2745">南品川ハイム</text>
<text class="k3" x="656" y="2844">羽田空港第３ターミナル駅</text>
<text class="k" x="898" y="2651">浦安市</text>
<text class="rl" transform="translate(847,2621) rotate(-14)">東京メトロ東西線</text>
<text class="rl" transform="translate(1000,2566) rotate(16)">武蔵野線</text>
<text class="k" x="1074" y="2581">習志野市</text>
<text class="rl" transform="translate(1144,2583) rotate(-27)">京成本線</text>
<text class="rl" transform="translate(1148,2630) rotate(28)">総武本線</text>
<text class="rl" transform="translate(1120,2648) rotate(33)">京葉線</text>
</g>
<text x="1176" y="2712" style="font-size:24px;fill:#222">千</text>

<rect x="1200.600" y="2556" width="41.400" height="422" fill="#e5e4df"/>
<rect x="42" y="2495" width="1200" height="61" fill="#4d6b7a"/>
<rect x="42" y="2495" width="1200" height="2" fill="#999"/>
<rect x="42" y="2495" width="2" height="484" fill="#999"/>
<rect x="42" y="2977" width="1158" height="1.500" fill="#ccc"/>
<path d="M65.500 2519.500H87V2536H65.500Z" fill="none" stroke="#fff" stroke-width="1.800"/><rect x="65" y="2519" width="7" height="17" fill="#fff"/><path d="M67 2527.500H72M70 2525L73 2527.500L70 2530" stroke="#4d6b7a" stroke-width="1.200" fill="none"/>
<text x="108.500" y="2526.500" style="font-size:15.800px;fill:#fff">主要駅＆主要スポット</text>
<text x="282.500" y="2524" style="font-size:13px;fill:#6d8795;text-anchor:middle">★</text>
<circle cx="112.600" cy="2541" r="5.500" fill="#2a7de1"/><text x="112.600" y="2544.500" style="font-size:9px;font-weight:bold;fill:#fff;text-anchor:middle">i</text>
<text x="123.700" y="2545" style="font-size:10.400px;fill:#f0f4f6">この地図は <tspan font-weight="bold">Google</tspan> マイマップで作成されました。</text>
<text x="372.600" y="2545" style="font-size:10.300px;fill:#8cc4e8">独自に作成する。</text>
<g fill="#fff"><circle cx="1144.500" cy="2526.500" r="2.800"/><circle cx="1156" cy="2520.500" r="2.800"/><circle cx="1156" cy="2532.500" r="2.800"/></g><path d="M1156 2520.500L1144.500 2526.500L1156 2532.500" stroke="#fff" stroke-width="1.600" fill="none"/>
<path d="M1202.500 2524V2519.500H1208M1216 2519.500H1221V2524M1221 2529.500V2534H1216M1208 2534H1202.500V2529.500" stroke="#fff" stroke-width="1.800" fill="none"/>

<rect x="60" y="2894" width="29" height="58" rx="1" fill="#fff"/><path d="M69 2908H80M74.500 2902.500V2913.500" stroke="#888" stroke-width="2.400"/><path d="M69 2938H80" stroke="#888" stroke-width="2.400"/><path d="M62 2923H87" stroke="#eee"/>
<rect x="48" y="2961" width="215" height="16" fill="#fff" opacity=".55"/>
<text x="52" y="2972" style="font-size:10px;fill:#777">地図データ ©2025</text><text x="147" y="2972" style="font-size:10px;fill:#5a8fd8">利用規約</text><text x="199" y="2972" style="font-size:10px;fill:#777">2 km</text>
<path d="M226.500 2966V2971H255V2966" stroke="#666" fill="none"/>
<text x="590" y="2954" class="h" style="font-size:18px"><tspan fill="#4285f4">G</tspan><tspan fill="#ea4335">o</tspan><tspan fill="#fbbc05">o</tspan><tspan fill="#4285f4">g</tspan><tspan fill="#34a853">l</tspan><tspan fill="#ea4335">e</tspan></text>
<text x="644" y="2954" class="h" style="font-size:15px;fill:#777">My Maps</text>
<rect x="963.500" y="2963" width="278.500" height="16" fill="#fff" opacity=".8"/>
<text class="at" x="970" y="2973">キーボード ショートカット</text><text class="at" x="1104" y="2973">地図データ ©2025</text><text class="at" x="1198" y="2973">利用規約</text>
</svg>

<!-- footer -->
<div class="b" style="left:1165px;top:3019px;width:77px;height:41px;background:#66c3f1;border-radius:5px 5px 0 0"></div>
<svg style="left:1165px;top:3019px" width="77" height="41" viewBox="0 0 77 41"><path d="M39 27V11M35 16L39 10L43 16" stroke="#fff" stroke-width="1.600" fill="none"/></svg>
<div class="b" style="left:0;top:3059px;width:1284px;height:53px;background:#3399ff"></div>
<div class="fn"><span>ホーム</span><span>特徴＆特典</span><span>物件概要</span><span>お部屋の紹介</span><span>料金について</span><span>周辺の店舗・施設</span><span>アクセス・地図</span><span>防犯・防災情報</span><span>お問い合わせ</span><span></span></div>
<div class="b" style="left:0;top:3112px;width:1284px;height:38px;background:#d2f0fd"></div>
<div class="c" style="top:3120px;font-size:10.600px;color:#444">京浜急行線「青物横丁駅」徒歩3分・京浜東北線「大井町駅」徒歩12分・東急大井町線「大井町駅」徒歩13分・りんかい線「品川シーサイド駅」徒歩10分</div>
<div class="b" style="left:0;top:3150px;width:1284px;height:55px;background:#33b9ff"></div>
<div class="c" style="top:3159px;font-size:12px;color:#fff">南品川ハイム　東京都品川区南品川3-4-13</div>
<div class="c" style="top:3179px;font-size:12px;color:#fff">管理会社：株式会社Ｋプラン　東京都品川区南品川5-10-27　TEL.03-3474-9501</div>
<div class="c" style="top:3210px;font-size:12.500px;color:#666">Copyright© 南品川ハイム All Rights Reserved.</div>
</body></html>
